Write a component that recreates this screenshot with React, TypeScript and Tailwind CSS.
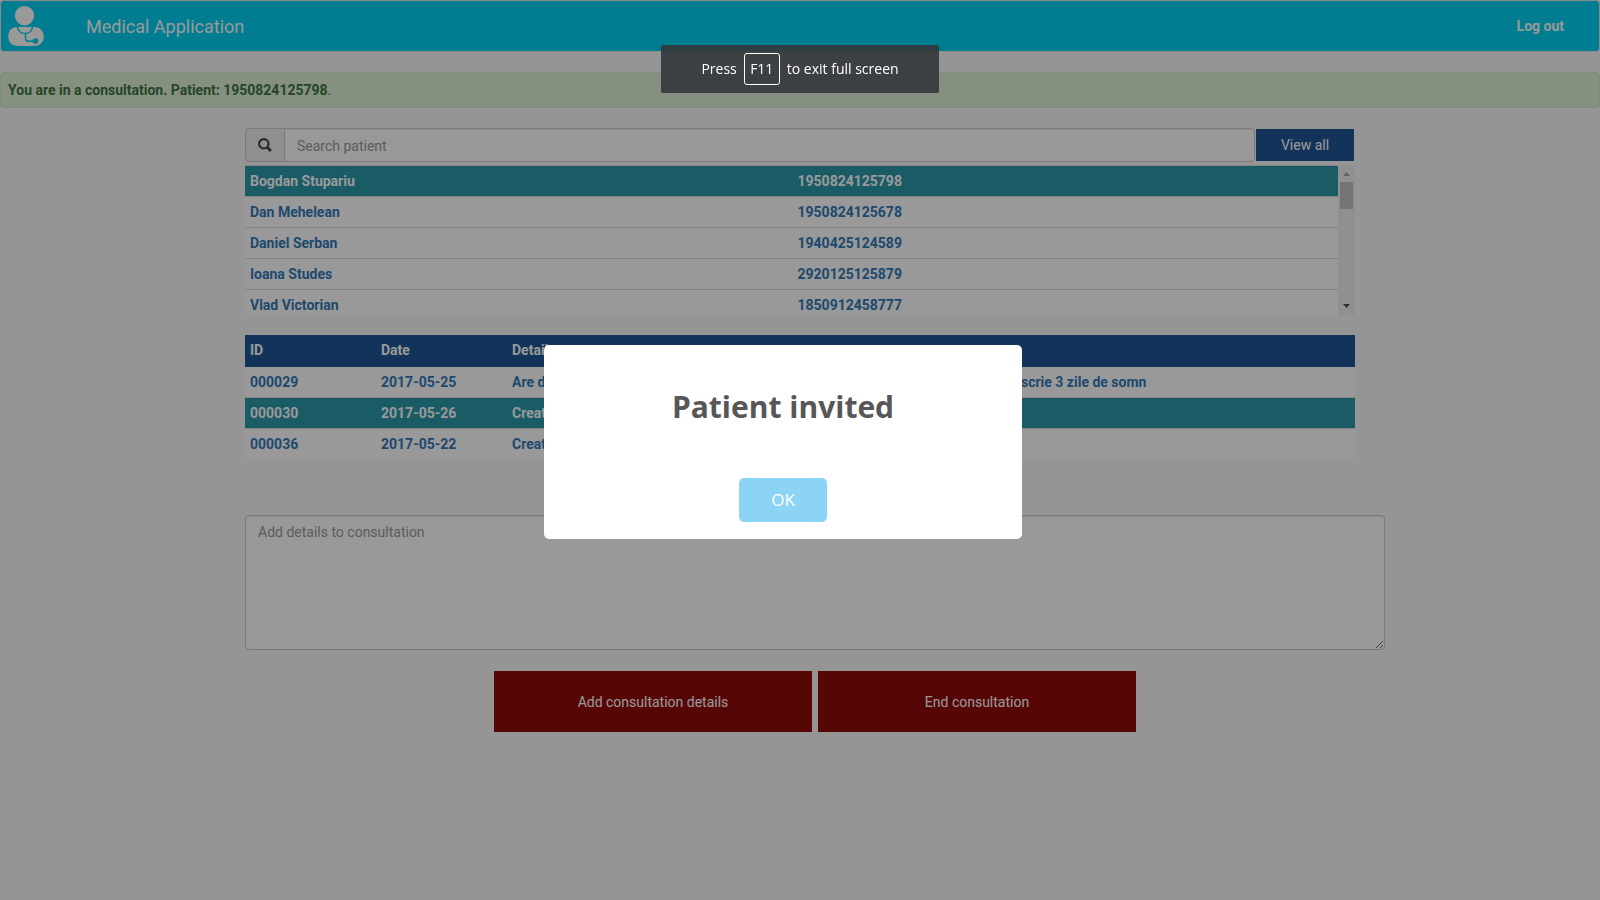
import React from 'react';

const patients = [
  { name: 'Bogdan Stupariu', code: '1950824125798' },
  { name: 'Dan Mehelean', code: '1950824125678' },
  { name: 'Daniel Serban', code: '1940425124589' },
  { name: 'Ioana Studes', code: '2920125125879' },
  { name: 'Vlad Victorian', code: '1850912458777' },
];

const consultations = [
  {
    id: '000029',
    date: '2017-05-25',
    details:
      'Are dureri de gat foarte puternice, nu a dormit de doua zile si este obosit. I se prescrie 3 zile de somn',
  },
  { id: '000030', date: '2017-05-26', details: 'Created' },
  { id: '000036', date: '2017-05-22', details: 'Created' },
];

function DoctorIcon() {
  return (
    <svg width="36" height="40" viewBox="0 0 36 40" aria-hidden="true">
      <circle cx="16.5" cy="9.7" r="9.7" fill="#fff" />
      <path
        d="M9 21h17.500c5.500 0 9.300 4.200 9.300 9.500S32 40 26.500 40H9.500C4 40 0.200 36 0.200 30.500S3.500 21 9 21z"
        fill="#fff"
      />
      <path
        d="M9.300 20.500c0.500 4 3.500 7 7.700 7s7.200-3 7.700-7M17.500 27.500v4.500c0 2.200 1 3.200 3.200 3.200H26"
        fill="none"
        stroke="#00d0f0"
        strokeWidth="1.500"
      />
      <circle cx="27.500" cy="35" r="2.800" fill="#00d0f0" />
    </svg>
  );
}

function SearchIcon() {
  return (
    <svg width="14" height="14" viewBox="0 0 14 14" role="img" aria-label="Search patient">
      <circle cx="5.800" cy="5.800" r="4.700" fill="none" stroke="#444" strokeWidth="2.100" />
      <path d="M9.300 9.300l3.600 3.600" stroke="#444" strokeWidth="2.800" />
    </svg>
  );
}

function Header() {
  return (
    <header className="mb-5 flex h-[52px] items-center rounded border border-[#e7e7e7] bg-[#00d0f0] pr-[35px] pl-[7px] text-white">
      <DoctorIcon />
      <h1 className="ml-[42px] pt-0.5 text-lg leading-5">Medical Application</h1>
      <a href="#logout" className="ml-auto font-bold">
        Log out
      </a>
    </header>
  );
}

function ScrollRail() {
  return (
    <div className="flex w-[17px] flex-none flex-col items-center bg-[#f1f1f1]" aria-hidden="true">
      <svg width="17" height="17" viewBox="0 0 17 17">
        <path d="M5 11h7L8.500 7z" fill="#a3a3a3" />
      </svg>
      <div className="h-[27px] w-[13px] bg-[#c1c1c1]" />
      <svg width="17" height="17" viewBox="0 0 17 17" className="mt-auto">
        <path d="M5 6h7L8.500 10z" fill="#505050" />
      </svg>
    </div>
  );
}

function PatientList() {
  return (
    <div className="mt-[3px] flex h-[150px] overflow-hidden">
      <div className="h-full flex-1 overflow-hidden bg-white">
        <table className="w-full table-fixed border-separate border-spacing-0">
          <tbody>
            {patients.map((p, i) => (
              <tr key={p.code} className={i === 0 ? 'bg-[#2a99aa] text-white' : 'text-[#337ab7]'}>
                <td className="border-t border-[#ddd] p-[5px] font-bold">
                  <a href={'#' + p.code}>{p.name}</a>
                </td>
                <td className="border-t border-[#ddd] py-[5px] pr-[5px] pl-1.5 font-bold">
                  <a href={'#' + p.code}>{p.code}</a>
                </td>
              </tr>
            ))}
          </tbody>
        </table>
      </div>
      <ScrollRail />
    </div>
  );
}

function ConsultationTable() {
  return (
    <table className="mt-5 w-full table-fixed border-separate border-spacing-0 bg-white">
      <thead>
        <tr className="h-8 bg-[#1e5796] text-left text-white">
          <th className="w-[131px] px-[5px] pb-0.5 font-bold">ID</th>
          <th className="w-[131px] px-[5px] pb-0.5 font-bold">Date</th>
          <th className="px-[5px] pb-0.5 font-bold">Details</th>
        </tr>
      </thead>
      <tbody>
        {consultations.map((c, i) => {
          const cell = i === 0 ? 'p-[5px] font-bold' : 'border-t border-[#ddd] p-[5px] font-bold';
          return (
            <tr key={c.id} className={i === 1 ? 'bg-[#2a99aa] text-white' : 'text-[#337ab7]'}>
              <td className={cell}>
                <a href={'#' + c.id}>{c.id}</a>
              </td>
              <td className={cell}>
                <a href={'#' + c.id}>{c.date}</a>
              </td>
              <td className={cell}>
                <a href={'#' + c.id}>{c.details}</a>
              </td>
            </tr>
          );
        })}
      </tbody>
    </table>
  );
}

function InvitedDialog() {
  return (
    <div
      role="dialog"
      aria-modal="true"
      aria-labelledby="dialog-title"
      className="fixed top-[345px] left-1/2 -ml-64 flex w-[478px] flex-col items-center rounded-[5px] bg-white p-[17px] font-['Open_Sans','Liberation_Sans',sans-serif]"
    >
      <h2 id="dialog-title" className="mt-[25px] text-[30px] leading-10 font-bold text-[#575757]">
        Patient invited
      </h2>
      <button
        type="button"
        className="mt-[51px] h-11 rounded-[5px] bg-[#8cd4f5] px-8 text-[17px] leading-6 font-medium text-white"
      >
        OK
      </button>
    </div>
  );
}

function FullScreenHint() {
  return (
    <div className="fixed top-[45px] left-1/2 flex h-12 w-[278px] -translate-x-1/2 items-center justify-center rounded-xs bg-[#34373b]/90 font-['Open_Sans','Liberation_Sans',sans-serif] text-sm text-white">
      <span>Press</span>
      <kbd className="mx-[7px] flex h-8 w-9 items-center justify-center rounded-[3px] border border-white font-['Open_Sans','Liberation_Sans',sans-serif] text-sm">
        F11
      </kbd>
      <span>to exit full screen</span>
    </div>
  );
}

export default function App() {
  return (
    <div className="min-h-screen bg-[#f8f8f8] font-[Roboto,'Liberation_Sans',sans-serif] text-sm leading-5 text-[#333]">
      <Header />
      <div
        role="status"
        className="mb-5 rounded border border-[#d6e9c6] bg-[#dff0d8] px-[7px] py-[7px] text-[#3c763d]"
      >
        <strong className="font-bold">You are in a consultation. Patient: 1950824125798</strong>.
      </div>

      <main className="mx-auto max-w-[1140px] px-[15px]">
        <form className="flex items-center">
          <label
            htmlFor="search"
            className="flex h-[34px] w-10 flex-none items-center justify-center rounded-l border border-[#ccc] bg-[#eee]"
          >
            <SearchIcon />
          </label>
          <input
            id="search"
            type="text"
            placeholder="Search patient"
            className="-ml-px h-[34px] min-w-0 flex-1 rounded-r border border-[#ccc] bg-white px-3 pt-0.5 shadow-[inset_0_1px_1px_rgba(0,0,0,0.075)] placeholder:text-[#999]"
          />
          <button type="button" className="mx-px h-8 w-[98px] flex-none bg-[#1e5796] text-white">
            View all
          </button>
        </form>

        <PatientList />
        <ConsultationTable />

        <section className="mt-14 -mr-[30px]">
          <textarea
            aria-label="Add details to consultation"
            placeholder="Add details to consultation"
            className="block h-[135px] w-full resize rounded border border-[#ccc] bg-white px-3 py-1.5 shadow-[inset_0_1px_1px_rgba(0,0,0,0.075)] placeholder:text-[#999]"
          />
          <div className="mt-[21px] flex justify-center gap-1.5">
            <button type="button" className="h-[61px] w-[318px] bg-[#910b0b] text-white">
              Add consultation details
            </button>
            <button type="button" className="h-[61px] w-[318px] bg-[#910b0b] text-white">
              End consultation
            </button>
          </div>
        </section>
      </main>

      <div className="fixed inset-0 bg-black/40" />
      <InvitedDialog />
      <FullScreenHint />
    </div>
  );
}
